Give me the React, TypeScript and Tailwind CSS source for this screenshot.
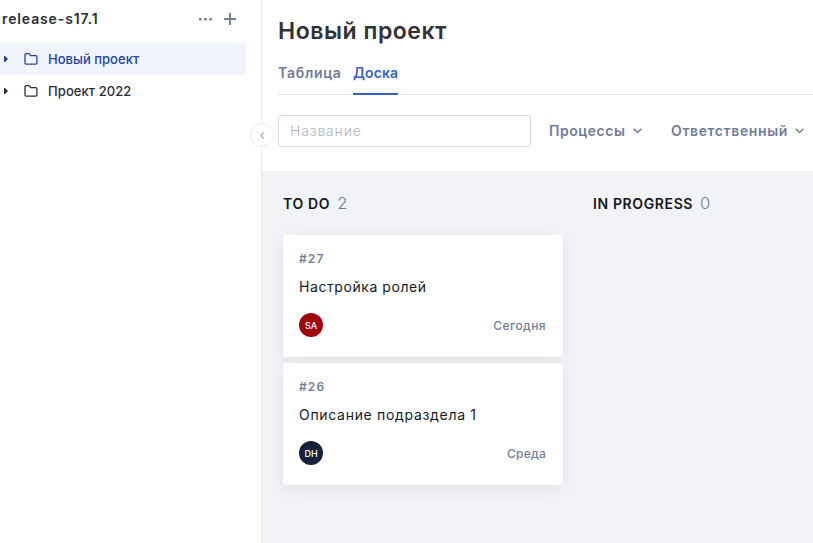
type CardProps = { id: string; title: string; titleClass: string; initials: string; avatar: string; due: string; dueClass: string };

function Folder() {
  return (
    <svg className="ml-4 size-[14px] shrink-0" viewBox="0 0 14 14" fill="none" stroke="currentColor" strokeWidth="1.300" strokeLinejoin="round">
      <path d="M1 2.800c0-.7.4-1.100 1.100-1.100h2.600c.4 0 .7.2.9.500l1 1.500h5.200c.7 0 1.100.4 1.100 1.100v6.300c0 .7-.4 1.100-1.100 1.100H2.100c-.7 0-1.100-.4-1.100-1.100z" />
    </svg>
  );
}

function TreeRow({ label, active = false, labelClass }: { label: string; active?: boolean; labelClass: string }) {
  return (
    <div className={`flex h-8 w-[246px] items-center rounded-r-[3px] pl-1 text-[13px] ${active ? "bg-[#f0f4ff] text-[#24459c]" : "text-[#292d3a]"}`}>
      <svg className="h-[6px] w-1 shrink-0" viewBox="0 0 4 6" fill="currentColor">
        <path d="M0 0h1l3 3-3 3H0z" />
      </svg>
      <Folder />
      <span className={`ml-[10px] pt-[2px] font-[450] ${labelClass}`}>{label}</span>
    </div>
  );
}

function Chevron() {
  return (
    <svg className="h-[6px] w-[9px]" viewBox="0 0 9 6" fill="none" stroke="currentColor" strokeWidth="1.4">
      <path d="M.6.7l3.900 3.900L8.400.7" />
    </svg>
  );
}

function Card({ id, title, titleClass, initials, avatar, due, dueClass }: CardProps) {
  return (
    <article className="flex h-[122px] w-[280px] flex-col rounded-[3px] bg-white px-4 pt-4 shadow-[0_4px_16px_rgba(30,35,55,0.07)]">
      <div className="h-4 text-[12px] leading-4 font-semibold tracking-[1.100px] text-[#717d9d]">{id}</div>
      <h3 className={`mt-[10px] h-5 text-[14px] leading-5 whitespace-nowrap text-[#17191e] ${titleClass}`}>{title}</h3>
      <div className="mt-4 flex h-6 items-center justify-between">
        <span className={`flex size-6 items-center justify-center rounded-full pt-px text-[9px] font-medium text-white ${avatar}`}>{initials}</span>
        <span className={`mr-px pt-[2px] text-[12px] font-[450] text-[#717d9d] ${dueClass}`}>{due}</span>
      </div>
    </article>
  );
}

export default function App() {
  return (
    <div className="flex h-[543px] w-[813px] overflow-hidden bg-white font-['Inter','Noto_Sans',sans-serif]">
      <aside className="relative w-[262px] shrink-0 border-r border-[#e9ebf7]">
        <div className="flex h-[38px] w-[237px] items-center pl-[2px] text-[#292d3a]">
          <span className="pb-[2px] text-[14px] font-semibold tracking-[0.880px]">release-s17.1</span>
          <div className="ml-auto flex items-center gap-3 text-[#737d9c]">
            <svg className="h-[3px] w-[13px]" viewBox="0 0 13 3" fill="currentColor">
              <rect width="2.600" height="2.600" rx=".6" />
              <rect x="5.200" width="2.600" height="2.600" rx=".6" />
              <rect x="10.400" width="2.600" height="2.600" rx=".6" />
            </svg>
            <svg className="mr-px size-3" viewBox="0 0 12 12" stroke="currentColor" strokeWidth="2">
              <path d="M6 0v12M0 6h12" />
            </svg>
          </div>
        </div>
        <nav className="mt-[5px]">
          <TreeRow label="Новый проект" active labelClass="tracking-[0.030px]" />
          <TreeRow label="Проект 2022" labelClass="tracking-[0.080px]" />
        </nav>
        <button className="absolute top-[123px] left-[250px] z-10 flex size-6 items-center justify-center rounded-full border border-[#e9ebfa] bg-white text-[#a0b0e6]">
          <svg className="h-[7px] w-1" viewBox="0 0 4 7" fill="none" stroke="currentColor" strokeWidth="1.300">
            <path d="M3.600.5L.8 3.500l2.800 3" />
          </svg>
        </button>
      </aside>
      <main className="flex min-w-0 flex-1 flex-col">
        <header className="h-[171px] shrink-0 pl-4">
          <h1 className="h-[62px] pt-[15px] text-[23px] leading-8 font-semibold tracking-[0.540px] whitespace-nowrap text-[#303238]">Новый проект</h1>
          <div className="flex h-[33px] gap-3 border-b border-[#e4e6ee] text-[14px] leading-[22px] font-semibold">
            <span className="w-[63px] tracking-[0.720px] whitespace-nowrap text-[#717d9d]">Таблица</span>
            <span className="h-[33px] w-[45px] border-b-2 border-[#3565c4] tracking-[0.100px] whitespace-nowrap text-[#3565c4]">Доска</span>
          </div>
          <div className="mt-5 flex h-8 items-center whitespace-nowrap">
            <input className="h-8 w-[253px] shrink-0 rounded-[3px] border border-[#d9dbe6] px-[11px] pb-[2px] text-[14px] font-light tracking-[0.850px] outline-none placeholder:text-[#aeb4c5]" placeholder="Название" />
            <button className="ml-[18px] flex w-[93px] shrink-0 items-center justify-between text-[14px] font-semibold tracking-[0.540px] text-[#717d9d]"><span className="pb-[2px]">Процессы</span><Chevron /></button>
            <button className="ml-[29px] flex w-[133px] shrink-0 items-center justify-between text-[14px] font-semibold tracking-[0.620px] text-[#717d9d]"><span className="pb-[2px]">Ответственный</span><Chevron /></button>
          </div>
        </header>
        <section className="flex flex-1 gap-[30px] bg-[#f2f3f7] pt-5 pl-[21px]">
          <div className="w-[280px] shrink-0">
            <h2 className="flex h-6 items-center pt-px text-[14px] font-semibold tracking-[0.650px] text-[#15171b]">TO DO<span className="ml-[7px] text-[16.5px] font-light tracking-normal text-[#717d9d]">2</span></h2>
            <div className="mt-5 flex flex-col gap-[6px]">
              <Card id="#27" title="Настройка ролей" titleClass="tracking-[0.570px]" initials="SA" avatar="bg-[#9e060b]" due="Сегодня" dueClass="tracking-[0.420px]" />
              <Card id="#26" title="Описание подраздела 1" titleClass="tracking-[0.690px]" initials="DH" avatar="bg-[#16213c]" due="Среда" dueClass="tracking-[0.250px]" />
            </div>
          </div>
          <div className="shrink-0">
            <h2 className="flex h-6 items-center pt-px text-[14px] font-semibold tracking-[0.620px] whitespace-nowrap text-[#15171b]">IN PROGRESS<span className="ml-[7px] text-[16.5px] font-light tracking-normal text-[#717d9d]">0</span></h2>
          </div>
        </section>
      </main>
    </div>
  );
}
